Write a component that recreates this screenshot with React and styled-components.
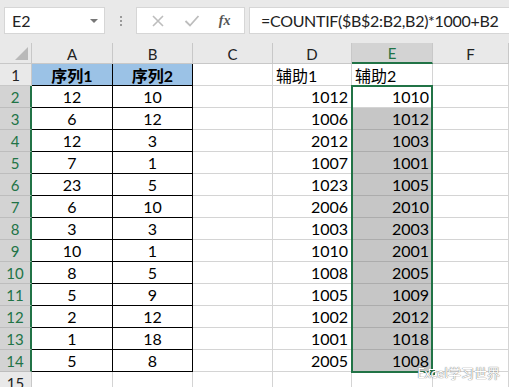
import React from 'react';
import styled, { createGlobalStyle } from 'styled-components';

const GlobalStyle = createGlobalStyle`
  html, body {
    margin: 0;
    padding: 0;
    background: #ffffff;
    overflow: hidden;
  }
  body {
    font-family: 'Lato', 'Noto Sans CJK SC', sans-serif;
  }
`;

const GREEN = '#217346';
const GRID = '#d4d4d4';

const Page = styled.div`
  width: 509px;
  height: 387px;
  position: relative;
  overflow: hidden;
  background: #ffffff;
`;

const Toolbar = styled.div`
  height: 43px;
  box-sizing: border-box;
  background: #e9e9e9;
  display: flex;
  align-items: flex-start;
  padding: 7px 0 0 4px;
`;

const NameBox = styled.div`
  width: 101px;
  height: 27px;
  box-sizing: border-box;
  background: #fff;
  border: 1px solid #d6d6d6;
  display: flex;
  align-items: center;
  justify-content: space-between;
  padding: 0 6px 0 7px;
  font-size: 16px;
  color: #222;
`;

const Caret = styled.span`
  width: 0;
  height: 0;
  border-left: 4px solid transparent;
  border-right: 4px solid transparent;
  border-top: 4px solid #777;
`;

const Grip = styled.div`
  width: 31px;
  height: 27px;
  display: flex;
  flex-direction: column;
  align-items: center;
  justify-content: center;
  gap: 2px;

  span {
    width: 2px;
    height: 2px;
    background: #9a9a9a;
  }
`;

const FuncBox = styled.div`
  width: 109px;
  height: 27px;
  box-sizing: border-box;
  background: #fff;
  border: 1px solid #d6d6d6;
  display: flex;
  align-items: center;
  justify-content: space-around;
  padding: 0 4px;
`;

const Fx = styled.span`
  font-family: 'Liberation Serif', serif;
  font-style: italic;
  font-weight: bold;
  font-size: 14px;
  color: #555;
`;

const FormulaBox = styled.div`
  flex: 1;
  margin-left: 4px;
  height: 27px;
  box-sizing: border-box;
  background: #fff;
  border: 1px solid #d6d6d6;
  border-right: none;
  display: flex;
  align-items: center;
  padding-left: 11px;
  font-size: 16px;
  letter-spacing: -0.3px;
  color: #222;
  white-space: nowrap;
`;

const SheetWrap = styled.div`
  position: relative;
`;

const Sheet = styled.div`
  display: grid;
  grid-template-columns: 32px 81px 80px 80px 79px 81px 1fr;
  grid-template-rows: 21px repeat(15, 22px);
`;

const Corner = styled.div`
  background: #e9e9e9;
  border-right: 1px solid #c8c8c8;
  border-bottom: 1px solid #c8c8c8;
  box-sizing: border-box;
  position: relative;

  &::after {
    content: '';
    position: absolute;
    right: 3px;
    bottom: 3px;
    width: 0;
    height: 0;
    border-left: 13px solid transparent;
    border-bottom: 13px solid #b9b9b9;
  }
`;

const ColHead = styled.div`
  box-sizing: border-box;
  background: ${({ $active }) => ($active ? '#d3d3d3' : '#e9e9e9')};
  color: ${({ $active }) => ($active ? GREEN : '#222')};
  border-right: 1px solid #c8c8c8;
  border-bottom: ${({ $active }) => ($active ? `2px solid ${GREEN}` : '1px solid #c8c8c8')};
  display: flex;
  align-items: center;
  justify-content: center;
  font-size: 15px;
  padding-top: 1px;
`;

const RowHead = styled.div`
  box-sizing: border-box;
  background: ${({ $active }) => ($active ? '#d3d3d3' : '#e9e9e9')};
  color: ${({ $active }) => ($active ? GREEN : '#222')};
  border-right: ${({ $active }) => ($active ? `2px solid ${GREEN}` : '1px solid #c8c8c8')};
  border-bottom: 1px solid ${({ $active }) => ($active ? '#bdbdbd' : '#c8c8c8')};
  display: flex;
  align-items: center;
  justify-content: center;
  font-size: 15px;
`;

const Cell = styled.div`
  box-sizing: border-box;
  background: ${({ $fill }) => $fill || '#fff'};
  border-right: 1px solid ${({ $boxed }) => ($boxed ? '#000' : GRID)};
  border-bottom: 1px solid ${({ $boxed, $sel }) => ($boxed ? '#000' : $sel ? '#acacac' : GRID)};
  display: flex;
  align-items: center;
  justify-content: ${({ $align }) => $align || 'flex-start'};
  padding: 0 3px;
  font-size: 16px;
  font-weight: ${({ $bold }) => ($bold ? 700 : 400)};
  color: #000;
  white-space: nowrap;
`;

const Selection = styled.div`
  position: absolute;
  left: 351px;
  top: 42px;
  width: 82px;
  height: 288px;
  box-sizing: border-box;
  border: 2px solid ${GREEN};
  pointer-events: none;
`;

const FillHandle = styled.div`
  position: absolute;
  left: 429px;
  top: 326px;
  width: 7px;
  height: 7px;
  box-sizing: border-box;
  background: ${GREEN};
  border: 1px solid #fff;
`;

const Watermark = styled.div`
  position: absolute;
  right: 9px;
  bottom: 8px;
  font-family: 'Noto Sans CJK SC', sans-serif;
  font-size: 13px;
  line-height: 1;
  color: #ffffff;
  text-shadow: 0 0 1px #7a7a7a, 0 0 1px #7a7a7a;
`;

const colA = [12, 6, 12, 7, 23, 6, 3, 10, 8, 5, 2, 1, 5];
const colB = [10, 12, 3, 1, 5, 10, 3, 1, 5, 9, 12, 18, 8];
const colD = [1012, 1006, 2012, 1007, 1023, 2006, 1003, 1010, 1008, 1005, 1002, 1001, 2005];
const colE = [1010, 1012, 1003, 1001, 1005, 2010, 2003, 2001, 2005, 1009, 2012, 1018, 1008];

const cols = ['A', 'B', 'C', 'D', 'E', 'F'];

const XIcon = () => (
  <svg width="14" height="14" viewBox="0 0 14 14">
    <path d="M2 2 L12 12 M12 2 L2 12" stroke="#bdbdbd" strokeWidth="1.6" fill="none" />
  </svg>
);

const CheckIcon = () => (
  <svg width="16" height="14" viewBox="0 0 16 14">
    <path d="M1.5 7 L6 11.5 L14.5 2" stroke="#bdbdbd" strokeWidth="1.8" fill="none" />
  </svg>
);

const App = () => {
  const rows = [];
  for (let r = 1; r <= 15; r++) {
    const i = r - 2;
    const data = r >= 2 && r <= 14;
    const boxed = r <= 14;
    rows.push(
      <React.Fragment key={r}>
        <RowHead $active={data}>{r}</RowHead>
        <Cell $boxed={boxed} $align="center" $bold={r === 1} $fill={r === 1 ? '#9bc2e6' : null}>
          {r === 1 ? '序列1' : data ? colA[i] : ''}
        </Cell>
        <Cell $boxed={boxed} $align="center" $bold={r === 1} $fill={r === 1 ? '#9bc2e6' : null}>
          {r === 1 ? '序列2' : data ? colB[i] : ''}
        </Cell>
        <Cell />
        <Cell $align={r === 1 ? 'flex-start' : 'flex-end'}>
          {r === 1 ? '辅助1' : data ? colD[i] : ''}
        </Cell>
        <Cell
          $align={r === 1 ? 'flex-start' : 'flex-end'}
          $sel={r >= 3 && r <= 14}
          $fill={r >= 3 && r <= 14 ? '#c6c6c6' : null}
        >
          {r === 1 ? '辅助2' : data ? colE[i] : ''}
        </Cell>
        <Cell />
      </React.Fragment>
    );
  }

  return (
    <Page>
      <GlobalStyle />
      <Toolbar>
        <NameBox>
          E2
          <Caret />
        </NameBox>
        <Grip>
          <span />
          <span />
          <span />
        </Grip>
        <FuncBox>
          <XIcon />
          <CheckIcon />
          <Fx>fx</Fx>
        </FuncBox>
        <FormulaBox>=COUNTIF($B$2:B2,B2)*1000+B2</FormulaBox>
      </Toolbar>
      <SheetWrap>
        <Sheet>
          <Corner />
          {cols.map((c) => (
            <ColHead key={c} $active={c === 'E'}>
              {c}
            </ColHead>
          ))}
          {rows}
        </Sheet>
        <Selection />
        <FillHandle />
      </SheetWrap>
      <Watermark>Excel学习世界</Watermark>
    </Page>
  );
};

export default App;
